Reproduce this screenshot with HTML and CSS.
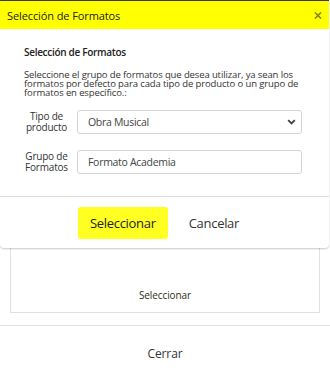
FILE: index.html
```html
<!DOCTYPE html>
<html lang="es">
<head>
<meta charset="utf-8">
<title>Selección de Formatos</title>
<link rel="stylesheet" href="styles.css">
</head>
<body>
<div class="under">
  <div class="under-box">
    <span class="under-link">Seleccionar</span>
  </div>
  <div class="under-footer">Cerrar</div>
</div>

<div class="modal">
  <div class="modal-header">
    <span class="modal-title">Selección de Formatos</span>
    <svg class="close" width="8" height="7" viewBox="0 0 8 7"><path d="M1 0.5L7 6.5M7 0.5L1 6.5" stroke="#85850a" stroke-width="1.6" fill="none"/></svg>
  </div>
  <div class="modal-body">
    <div class="section-title">Selección de Formatos</div>
    <p class="desc">Seleccione el grupo de formatos que desea utilizar, ya sean los formatos por defecto para cada tipo de producto o un grupo de formatos en específico.:</p>
    <div class="row">
      <label class="lbl">Tipo de<br>producto</label>
      <div class="control select">
        <span>Obra Musical</span>
        <svg width="9" height="6" viewBox="0 0 9 6"><path d="M1.2 1.2L4.5 4.5L7.8 1.2" stroke="#444" stroke-width="1.9" fill="none"/></svg>
      </div>
    </div>
    <div class="row">
      <label class="lbl">Grupo de<br>Formatos</label>
      <div class="control"><span>Formato Academia</span></div>
    </div>
  </div>
  <div class="modal-footer">
    <span class="btn btn-primary">Seleccionar</span>
    <span class="btn">Cancelar</span>
  </div>
</div>
</body>
</html>
```
FILE: styles.css
```css
html, body {
  margin: 0;
  padding: 0;
  background: #fff;
  font-family: "Open Sans", "Noto Sans", sans-serif;
  color: #333;
}
body {
  width: 330px;
  height: 374px;
  overflow: hidden;
  position: relative;
}
.under {
  display: flex;
  flex-direction: column;
}
.under-box {
  margin: 0 10px;
  height: 313px;
  box-sizing: border-box;
  border: 1px solid #e0e0e0;
  border-top: none;
  display: flex;
  align-items: flex-end;
  justify-content: center;
  padding-bottom: 10px;
}
.under-link {
  font-size: 10px;
  letter-spacing: -0.1px;
  color: #2e2e10;
}
.under-footer {
  margin-top: 12px;
  border-top: 1px solid #e2e2e2;
  height: 54px;
  display: flex;
  align-items: center;
  justify-content: center;
  font-size: 12px;
  letter-spacing: -0.1px;
  color: #333;
}
.modal {
  position: absolute;
  top: 0;
  left: 0;
  width: 329px;
  background: #fff;
  border-top: 1px solid #3a3a3a;
  border-radius: 0 0 4px 4px;
  box-shadow: 0 1px 2px rgba(0,0,0,0.22);
}
.modal-header {
  height: 28px;
  background: #ffff00;
  display: flex;
  align-items: center;
  justify-content: space-between;
  padding: 0 7px 0 7px;
}
.modal-title {
  font-size: 11px;
  letter-spacing: -0.1px;
  color: #222;
}
.close {
  display: block;
}
.modal-body {
  padding: 16px 27px 22px 24px;
}
.section-title {
  font-size: 10px;
  line-height: 14px;
  font-weight: 600;
  letter-spacing: -0.3px;
  color: #222;
}
.desc {
  font-size: 9.5px;
  line-height: 9px;
  letter-spacing: -0.12px;
  margin: 11px 0 13px 0;
  color: #333;
}
.row {
  display: flex;
  align-items: center;
  gap: 8px;
  margin-bottom: 16px;
}
.row:last-child {
  margin-bottom: 0;
}
.lbl {
  width: 45px;
  font-size: 10px;
  line-height: 11px;
  letter-spacing: -0.2px;
  text-align: center;
  color: #333;
}
.control {
  flex: 1;
  height: 24px;
  box-sizing: border-box;
  border: 1px solid #d4d4d4;
  border-radius: 3px;
  display: flex;
  align-items: center;
  justify-content: space-between;
  padding: 0 5px 0 10px;
  font-size: 10.5px;
  letter-spacing: -0.3px;
  color: #444;
}
.modal-footer {
  border-top: 1px solid #dedede;
  display: flex;
  justify-content: center;
  gap: 9px;
  padding: 10px 0 9px 0;
}
.btn {
  height: 32px;
  display: flex;
  align-items: center;
  padding: 0 12px;
  border-radius: 3px;
  font-size: 13px;
  letter-spacing: -0.3px;
  color: #333;
}
.btn-primary {
  background: #ffff22;
  color: #222;
}
```
